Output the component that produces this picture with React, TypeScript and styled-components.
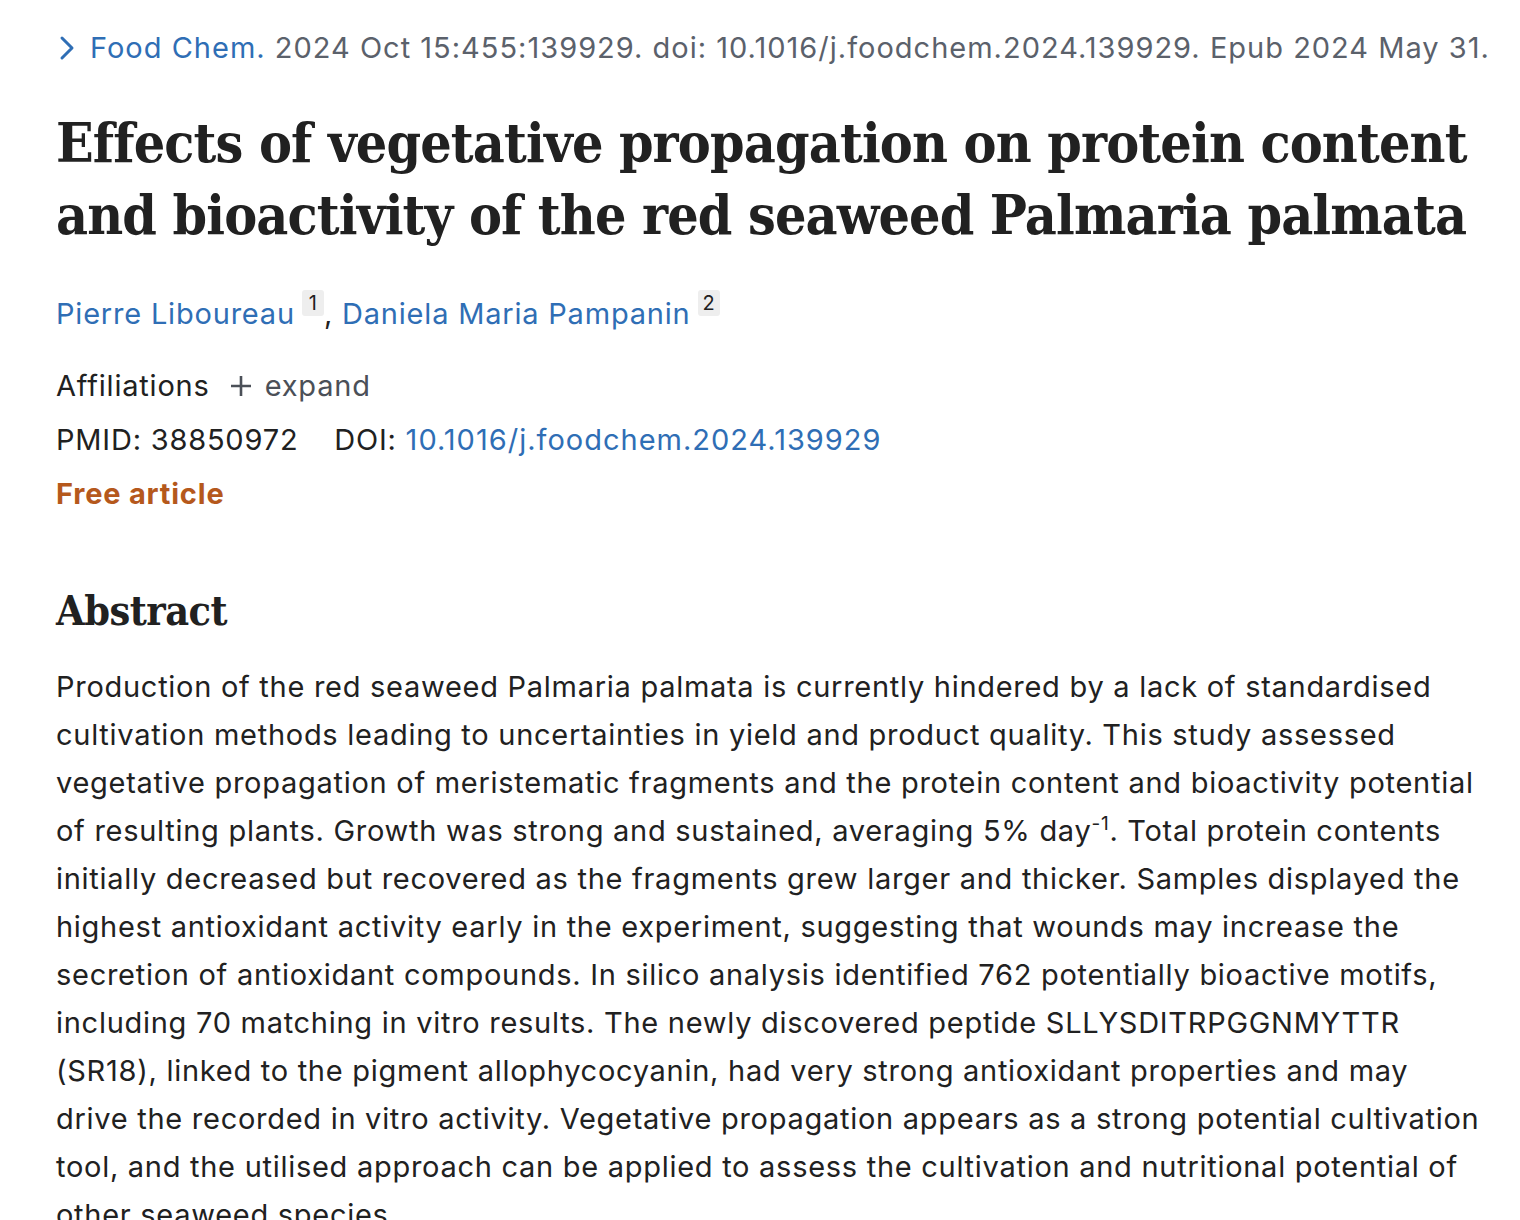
import React from "react";
import styled, { createGlobalStyle } from "styled-components";

const GlobalStyle = createGlobalStyle`
  html, body {
    margin: 0;
    padding: 0;
    background: #ffffff;
  }
  body {
    font-family: Inter, "Noto Sans", "Liberation Sans", sans-serif;
    color: #212121;
    letter-spacing: 0.8px;
    -webkit-font-smoothing: antialiased;
  }
`;

const Page = styled.main`
  padding: 26px 0 0 56px;
  width: 1464px;
  overflow: hidden;
`;

const CitationLine = styled.div`
  display: flex;
  align-items: center;
  gap: 14px;
  font-size: 29px;
  line-height: 44px;
  letter-spacing: 1px;
  color: #5b616b;
  white-space: nowrap;
`;

const Chevron = styled.svg`
  width: 18px;
  height: 26px;
  flex: none;
  margin-left: 2px;
`;

const JournalLink = styled.a`
  color: #2f6eb5;
  text-decoration: none;
`;

const Title = styled.h1`
  margin: 37px 0 0;
  font-family: "DejaVu Serif Condensed", "DejaVu Serif", "Liberation Serif", serif;
  font-stretch: condensed;
  font-weight: 700;
  font-size: 55px;
  line-height: 72px;
  letter-spacing: -0.85px;
  color: #212121;
  white-space: nowrap;
`;

const Authors = styled.div`
  margin-top: 39px;
  font-size: 29px;
  line-height: 44px;
  color: #212121;
`;

const AuthorLink = styled.a`
  color: #2f6eb5;
  text-decoration: none;
`;

const AffNum = styled.sup`
  display: inline-block;
  margin-left: 7px;
  padding: 0 4px;
  min-width: 14px;
  text-align: center;
  background: #eeeeee;
  border-radius: 3px;
  font-size: 20px;
  line-height: 26px;
  letter-spacing: 0;
  vertical-align: 14px;
  color: #212121;
`;

const MetaBlock = styled.div`
  margin-top: 23px;
  display: flex;
  flex-direction: column;
  font-size: 29px;
  line-height: 54px;
`;

const Row = styled.div`
  display: flex;
  align-items: center;
  white-space: nowrap;
`;

const ExpandButton = styled.span`
  display: inline-flex;
  align-items: center;
  gap: 13px;
  margin-left: 20px;
  color: #4b5058;
`;

const PlainLink = styled.a`
  color: #2f6eb5;
  text-decoration: none;
  letter-spacing: 1px;
`;

const FreeArticle = styled.span`
  color: #b5581c;
  font-weight: 700;
`;

const Section = styled.section`
  margin-top: 62px;
`;

const SectionTitle = styled.h2`
  margin: 0;
  font-family: "DejaVu Serif Condensed", "DejaVu Serif", "Liberation Serif", serif;
  font-stretch: condensed;
  font-weight: 700;
  font-size: 41px;
  line-height: 56px;
  letter-spacing: -0.5px;
  color: #212121;
`;

const AbstractText = styled.p`
  margin: 24px 0 0;
  font-size: 29px;
  line-height: 48px;
  letter-spacing: 0.72px;
  color: #212121;
  white-space: nowrap;

  sup {
    font-size: 19px;
    line-height: 0;
  }
`;

const abstractLines: React.ReactNode[] = [
  "Production of the red seaweed Palmaria palmata is currently hindered by a lack of standardised",
  "cultivation methods leading to uncertainties in yield and product quality. This study assessed",
  "vegetative propagation of meristematic fragments and the protein content and bioactivity potential",
  <>
    of resulting plants. Growth was strong and sustained, averaging 5% day<sup>-1</sup>. Total protein contents
  </>,
  "initially decreased but recovered as the fragments grew larger and thicker. Samples displayed the",
  "highest antioxidant activity early in the experiment, suggesting that wounds may increase the",
  "secretion of antioxidant compounds. In silico analysis identified 762 potentially bioactive motifs,",
  "including 70 matching in vitro results. The newly discovered peptide SLLYSDITRPGGNMYTTR",
  "(SR18), linked to the pigment allophycocyanin, had very strong antioxidant properties and may",
  "drive the recorded in vitro activity. Vegetative propagation appears as a strong potential cultivation",
  "tool, and the utilised approach can be applied to assess the cultivation and nutritional potential of",
  "other seaweed species.",
];

export default function App() {
  return (
    <>
      <GlobalStyle />
      <Page>
        <CitationLine>
          <Chevron viewBox="0 0 18 26" fill="none" stroke="#2f6eb5" strokeWidth="3" strokeLinecap="round" strokeLinejoin="round">
            <path d="M4 3l10 10-10 10" />
          </Chevron>
          <span>
            <JournalLink href="#">Food Chem.</JournalLink> 2024 Oct 15:455:139929. doi:
            10.1016/j.foodchem.2024.139929. Epub 2024 May 31.
          </span>
        </CitationLine>

        <Title>
          Effects of vegetative propagation on protein content
          <br />
          and bioactivity of the red seaweed Palmaria palmata
        </Title>

        <Authors>
          <AuthorLink href="#">Pierre Liboureau</AuthorLink>
          <AffNum>1</AffNum>,{" "}
          <AuthorLink href="#">Daniela Maria Pampanin</AuthorLink>
          <AffNum>2</AffNum>
        </Authors>

        <MetaBlock>
          <Row>
            Affiliations
            <ExpandButton>
              <svg width="22" height="22" viewBox="0 0 22 22">
                <path d="M11 1v20M1 11h20" stroke="#4b5058" strokeWidth="2.6" />
              </svg>
              expand
            </ExpandButton>
          </Row>
          <Row>
            PMID: 38850972&nbsp;&nbsp;&nbsp; DOI:&nbsp;
            <PlainLink href="#">10.1016/j.foodchem.2024.139929</PlainLink>
          </Row>
          <Row>
            <FreeArticle>Free article</FreeArticle>
          </Row>
        </MetaBlock>

        <Section>
          <SectionTitle>Abstract</SectionTitle>
          <AbstractText>
            {abstractLines.map((line, i) => (
              <React.Fragment key={i}>
                {line}
                {i < abstractLines.length - 1 && <br />}
              </React.Fragment>
            ))}
          </AbstractText>
        </Section>
      </Page>
    </>
  );
}
